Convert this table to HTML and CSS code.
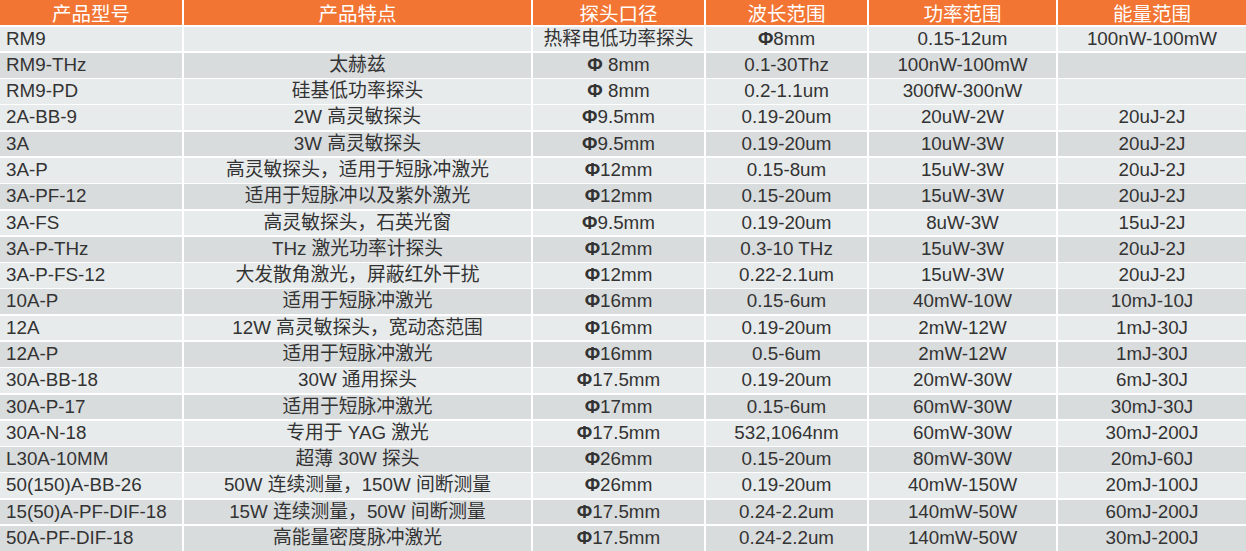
FILE: index.html
```html
<!DOCTYPE html>
<html lang="zh">
<head>
<meta charset="utf-8">
<title>探头参数表</title>
<link rel="stylesheet" href="styles.css">
</head>
<body>
<div class="spec">
  <div class="row head">
    <div>产品型号</div><div>产品特点</div><div>探头口径</div><div>波长范围</div><div>功率范围</div><div>能量范围</div>
  </div>
  <div class="row l">
    <div>RM9</div><div></div><div>热释电低功率探头</div><div><span class="phi">Φ</span>8mm</div><div>0.15-12um</div><div>100nW-100mW</div>
  </div>
  <div class="row d">
    <div>RM9-THz</div><div>太赫兹</div><div><span class="phi">Φ</span> 8mm</div><div>0.1-30Thz</div><div>100nW-100mW</div><div></div>
  </div>
  <div class="row l">
    <div>RM9-PD</div><div>硅基低功率探头</div><div><span class="phi">Φ</span> 8mm</div><div>0.2-1.1um</div><div>300fW-300nW</div><div></div>
  </div>
  <div class="row l">
    <div>2A-BB-9</div><div>2W 高灵敏探头</div><div><span class="phi">Φ</span>9.5mm</div><div>0.19-20um</div><div>20uW-2W</div><div>20uJ-2J</div>
  </div>
  <div class="row d">
    <div>3A</div><div>3W 高灵敏探头</div><div><span class="phi">Φ</span>9.5mm</div><div>0.19-20um</div><div>10uW-3W</div><div>20uJ-2J</div>
  </div>
  <div class="row l">
    <div>3A-P</div><div>高灵敏探头，适用于短脉冲激光</div><div><span class="phi">Φ</span>12mm</div><div>0.15-8um</div><div>15uW-3W</div><div>20uJ-2J</div>
  </div>
  <div class="row d">
    <div>3A-PF-12</div><div>适用于短脉冲以及紫外激光</div><div><span class="phi">Φ</span>12mm</div><div>0.15-20um</div><div>15uW-3W</div><div>20uJ-2J</div>
  </div>
  <div class="row l">
    <div>3A-FS</div><div>高灵敏探头，石英光窗</div><div><span class="phi">Φ</span>9.5mm</div><div>0.19-20um</div><div>8uW-3W</div><div>15uJ-2J</div>
  </div>
  <div class="row d">
    <div>3A-P-THz</div><div>THz 激光功率计探头</div><div><span class="phi">Φ</span>12mm</div><div>0.3-10 THz</div><div>15uW-3W</div><div>20uJ-2J</div>
  </div>
  <div class="row l">
    <div>3A-P-FS-12</div><div>大发散角激光，屏蔽红外干扰</div><div><span class="phi">Φ</span>12mm</div><div>0.22-2.1um</div><div>15uW-3W</div><div>20uJ-2J</div>
  </div>
  <div class="row d">
    <div>10A-P</div><div>适用于短脉冲激光</div><div><span class="phi">Φ</span>16mm</div><div>0.15-6um</div><div>40mW-10W</div><div>10mJ-10J</div>
  </div>
  <div class="row l">
    <div>12A</div><div>12W 高灵敏探头，宽动态范围</div><div><span class="phi">Φ</span>16mm</div><div>0.19-20um</div><div>2mW-12W</div><div>1mJ-30J</div>
  </div>
  <div class="row d">
    <div>12A-P</div><div>适用于短脉冲激光</div><div><span class="phi">Φ</span>16mm</div><div>0.5-6um</div><div>2mW-12W</div><div>1mJ-30J</div>
  </div>
  <div class="row l">
    <div>30A-BB-18</div><div>30W 通用探头</div><div><span class="phi">Φ</span>17.5mm</div><div>0.19-20um</div><div>20mW-30W</div><div>6mJ-30J</div>
  </div>
  <div class="row d">
    <div>30A-P-17</div><div>适用于短脉冲激光</div><div><span class="phi">Φ</span>17mm</div><div>0.15-6um</div><div>60mW-30W</div><div>30mJ-30J</div>
  </div>
  <div class="row l">
    <div>30A-N-18</div><div>专用于 YAG 激光</div><div><span class="phi">Φ</span>17.5mm</div><div>532,1064nm</div><div>60mW-30W</div><div>30mJ-200J</div>
  </div>
  <div class="row d">
    <div>L30A-10MM</div><div>超薄 30W 探头</div><div><span class="phi">Φ</span>26mm</div><div>0.15-20um</div><div>80mW-30W</div><div>20mJ-60J</div>
  </div>
  <div class="row l">
    <div>50(150)A-BB-26</div><div>50W 连续测量，150W 间断测量</div><div><span class="phi">Φ</span>26mm</div><div>0.19-20um</div><div>40mW-150W</div><div>20mJ-100J</div>
  </div>
  <div class="row d">
    <div>15(50)A-PF-DIF-18</div><div>15W 连续测量，50W 间断测量</div><div><span class="phi">Φ</span>17.5mm</div><div>0.24-2.2um</div><div>140mW-50W</div><div>60mJ-200J</div>
  </div>
  <div class="row d">
    <div>50A-PF-DIF-18</div><div>高能量密度脉冲激光</div><div><span class="phi">Φ</span>17.5mm</div><div>0.24-2.2um</div><div>140mW-50W</div><div>30mJ-200J</div>
  </div>
</div>
</body>
</html>
```

FILE: styles.css
```css
html, body {
  margin: 0;
  padding: 0;
  background: #ffffff;
}

.spec {
  display: grid;
  grid-template-columns: 182px 347px 171px 161px 187px 188px;
  grid-template-rows: 25px;
  grid-auto-rows: 24.69px;
  column-gap: 2px;
  row-gap: 1.6px;
  width: 1246px;
  background: #ffffff;
  font-family: "Liberation Sans", "Noto Sans CJK SC", Arial, sans-serif;
  font-size: 18.8px;
  color: #333333;
}

.row {
  display: contents;
}

.row > div {
  text-align: center;
  white-space: nowrap;
  line-height: 24.69px;
}

.row > div:first-child {
  text-align: left;
  padding-left: 6px;
}

.row.head > div {
  background: #f27533;
  color: #ffffff;
  font-family: "Noto Sans CJK SC", "Liberation Sans", sans-serif;
  font-size: 19.5px;
  line-height: 25px;
  text-align: center;
  padding-left: 0;
}

.row.l > div {
  background: #e8ebeb;
}

.row.d > div {
  background: #d9dcdd;
}

.phi {
  font-weight: bold;
}
```
